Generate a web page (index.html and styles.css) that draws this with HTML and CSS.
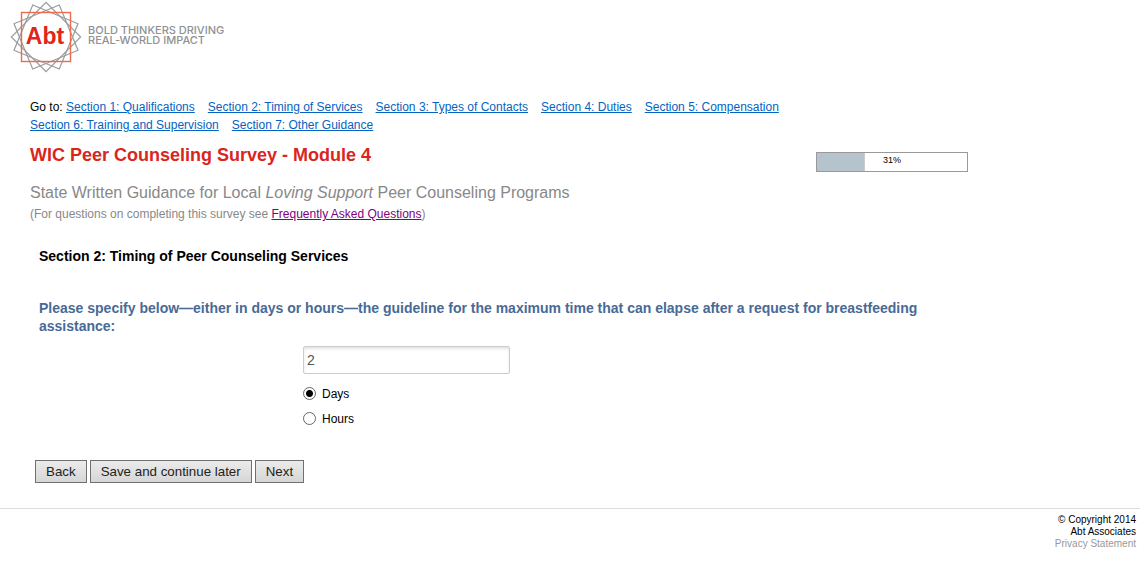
FILE: index.html
```html
<!DOCTYPE html>
<html lang="en">
<head>
  <meta charset="UTF-8">
  <meta name="viewport" content="width=device-width, initial-scale=1.0">
  <title>WIC Peer Counseling Survey - Module 4</title>
  <link rel="stylesheet" href="styles.css">
</head>
<body>
  <header class="header">
    <svg class="logo" width="240" height="76" viewBox="0 0 240 76" role="img" aria-label="Abt - Bold thinkers driving real-world impact">
      <g fill="none" stroke="#9a9c9e" stroke-width="1.2">
        <rect x="21.5" y="12.5" width="49" height="49" transform="rotate(22.5 46 37)"/>
        <rect x="21.5" y="12.5" width="49" height="49" transform="rotate(45 46 37)"/>
        <rect x="21.5" y="12.5" width="49" height="49" transform="rotate(67.5 46 37)"/>
      </g>
      <rect x="21.5" y="12.5" width="49" height="49" fill="none" stroke="#ee6b4d" stroke-width="1.4"/>
      <text class="logo-name" x="45" y="44" text-anchor="middle">Abt</text>
      <text class="logo-tag" x="88" y="34">BOLD THINKERS DRIVING</text>
      <text class="logo-tag" x="88" y="44">REAL-WORLD IMPACT</text>
    </svg>
  </header>

  <main class="main">
    <nav class="nav">
      <span>Go to: <a href="#s1">Section 1: Qualifications</a></span>
      <a href="#s2">Section 2: Timing of Services</a>
      <a href="#s3">Section 3: Types of Contacts</a>
      <a href="#s4">Section 4: Duties</a>
      <a href="#s5">Section 5: Compensation</a>
      <a href="#s6">Section 6: Training and Supervision</a>
      <a href="#s7">Section 7: Other Guidance</a>
    </nav>

    <div class="title-row">
      <h1>WIC Peer Counseling Survey - Module 4</h1>
      <div class="progress" role="progressbar" aria-label="Survey progress" aria-valuenow="31" aria-valuemin="0" aria-valuemax="100">
        <div class="progress-fill" style="width: 32%"></div>
        <span class="progress-text">31%</span>
      </div>
    </div>

    <p class="subtitle">State Written Guidance for Local <em>Loving Support</em> Peer Counseling Programs</p>
    <p class="help">(For questions on completing this survey see <a href="#faq">Frequently Asked Questions</a>)</p>

    <form class="survey">
      <h2>Section 2: Timing of Peer Counseling Services</h2>
      <p class="question" id="question">Please specify below—either in days or hours—the guideline for the maximum time that can elapse after a request for breastfeeding assistance:</p>

      <div class="answers">
        <input class="amount" type="text" name="amount" value="2" aria-labelledby="question">
        <label class="option"><input type="radio" name="unit" value="days" checked> Days</label>
        <label class="option"><input type="radio" name="unit" value="hours"> Hours</label>
      </div>

      <div class="buttons">
        <button type="button">Back</button>
        <button type="button">Save and continue later</button>
        <button type="button">Next</button>
      </div>
    </form>
  </main>

  <footer class="footer">
    <p>© Copyright 2014</p>
    <p>Abt Associates</p>
    <p><a href="#privacy">Privacy Statement</a></p>
  </footer>
</body>
</html>
```
FILE: styles.css
```css
* {
  margin: 0;
  padding: 0;
  box-sizing: border-box;
}

body {
  background: #fff;
  color: #000;
  font-family: "Liberation Sans", Arial, sans-serif;
  font-size: 12px;
}

.header {
  height: 98px;
}

.logo {
  display: block;
}

.logo-name {
  font-size: 23px;
  font-weight: bold;
  fill: #e1251b;
}

.logo-tag {
  font-family: Inter, sans-serif;
  font-size: 11px;
  font-weight: 500;
  fill: #8f9194;
}

.main {
  max-width: 968px;
  padding-left: 30px;
}

.nav {
  display: flex;
  flex-wrap: wrap;
  column-gap: 13px;
  max-width: 790px;
  line-height: 18px;
}

.nav a {
  color: #0563c1;
}

.title-row {
  display: flex;
  justify-content: space-between;
  margin-top: 10px;
}

h1 {
  color: #d9261c;
  font-size: 18px;
  line-height: 22px;
}

.progress {
  position: relative;
  width: 152px;
  height: 20px;
  margin-top: 8px;
  border: 1px solid #999;
}

.progress-fill {
  height: 100%;
  background: #b5c4cc;
  border-right: 1px solid #ccc;
}

.progress-text {
  position: absolute;
  top: 0;
  left: 0;
  width: 100%;
  font-size: 9px;
  line-height: 15px;
  text-align: center;
}

.subtitle {
  margin-top: 10px;
  color: #888;
  font-size: 16px;
  line-height: 22px;
}

.help {
  margin-top: 2px;
  color: #888;
  line-height: 16px;
}

.help a {
  color: #800080;
}

.survey {
  padding-left: 9px;
}

h2 {
  margin-top: 25px;
  font-size: 14px;
  line-height: 18px;
}

.question {
  margin-top: 34px;
  color: #486a96;
  font-size: 14px;
  font-weight: bold;
  line-height: 18px;
}

.answers {
  display: flex;
  flex-direction: column;
  align-items: flex-start;
  margin: 11px 0 0 264px;
}

.amount {
  width: 207px;
  height: 28px;
  margin-bottom: 7px;
  padding: 0 3px;
  border: 1px solid #ccc;
  border-radius: 2px;
  box-shadow: inset 0 2px 3px #e4e4e4;
  color: #555;
  font-family: inherit;
  font-size: 14px;
}

.option {
  display: flex;
  align-items: center;
  gap: 6px;
  height: 25px;
}

.option input {
  appearance: none;
  width: 13px;
  height: 13px;
  border: 1px solid #666;
  border-radius: 50%;
  background: #fff;
}

.option input:checked {
  background: radial-gradient(circle, #000 3px, #fff 4px);
}

.buttons {
  display: flex;
  gap: 3px;
  margin: 29px 0 0 -4px;
}

button {
  height: 23px;
  padding: 0 10px;
  border: 1px solid #707070;
  background: linear-gradient(#ebebeb, #d6d6d6);
  color: #222;
  font-family: inherit;
}

.footer {
  margin-top: 25px;
  padding: 5px 4px 0 0;
  border-top: 1px solid #ddd;
  font-size: 10px;
  line-height: 12px;
  text-align: right;
}

.footer a {
  color: #999;
  text-decoration: none;
}
```
